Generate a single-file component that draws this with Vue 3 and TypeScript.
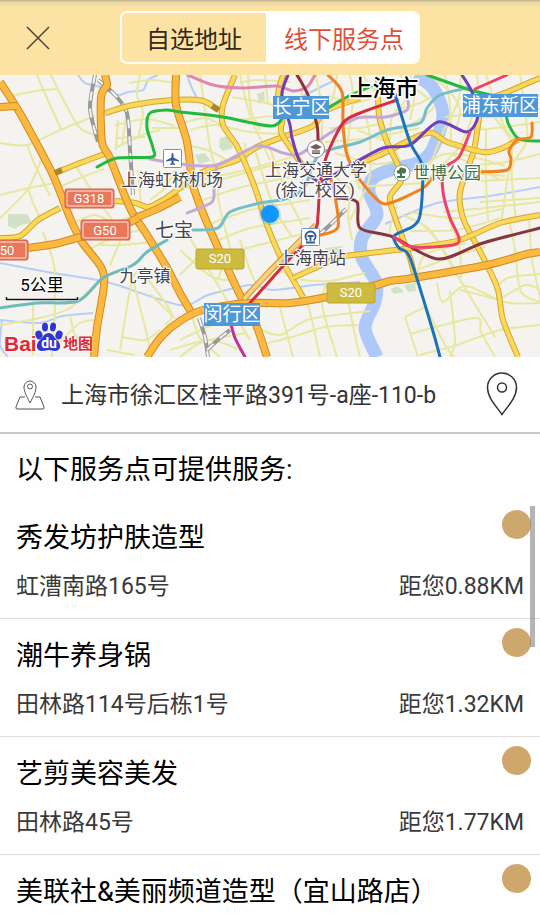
<script setup lang="ts">
import { ref } from 'vue'

type Road = { kind: string; pts: number[] }
type Shop = { name: string; address?: string; distance?: string }

const mode = ref<'custom' | 'offline'>('offline')
const address = ref('上海市徐汇区桂平路391号-a座-110-b')

const shops: Shop[] = [
  { name: '秀发坊护肤造型', address: '虹漕南路165号', distance: '距您0.88KM' },
  { name: '潮牛养身锅', address: '田林路114号后栋1号', distance: '距您1.32KM' },
  { name: '艺剪美容美发', address: '田林路45号', distance: '距您1.77KM' },
  { name: '美联社&美丽频道造型（宜山路店）' },
]

// Turns a flat x,y list into a smooth path through every point.
function smooth(p: number[]): string {
  const n = p.length / 2
  const x = (i: number) => p[2 * Math.min(Math.max(i, 0), n - 1)]
  const y = (i: number) => p[2 * Math.min(Math.max(i, 0), n - 1) + 1]
  let d = `M${x(0)} ${y(0)}`
  for (let i = 0; i < n - 1; i++) {
    const t = 7
    d += `C${x(i) + (x(i + 1) - x(i - 1)) / t} ${y(i) + (y(i + 1) - y(i - 1)) / t} ${x(i + 1) - (x(i + 2) - x(i)) / t} ${y(i + 1) - (y(i + 2) - y(i)) / t} ${x(i + 1)} ${y(i + 1)}`
  }
  return d
}

const streets: number[][] = [
  [37, 75, 50, 105, 61, 129], [51, 75, 65, 103, 80, 128, 100, 137], [0, 143, 27, 145, 60, 130, 95, 116],
  [27, 145, 35, 165, 50, 196], [12, 96, 35, 91, 57, 89], [0, 195, 20, 190, 55, 183], [0, 218, 28, 189, 45, 150],
  [28, 189, 34, 205, 42, 222], [75, 165, 105, 210, 130, 242], [60, 187, 80, 178, 104, 169], [115, 148, 145, 134, 160, 130],
  [118, 120, 116, 150], [127, 110, 122, 145], [115, 125, 147, 119, 175, 126], [115, 138, 145, 137], [140, 75, 137, 95, 143, 112, 138, 138],
  [129, 83, 152, 80, 175, 83], [152, 128, 180, 128], [141, 205, 138, 170], [150, 200, 165, 188, 175, 170],
  [75, 222, 95, 215, 115, 222, 138, 213], [100, 245, 120, 245, 153, 242], [110, 265, 127, 225], [88, 250, 112, 238, 140, 230],
  [52, 357, 54, 330, 55, 305, 54, 265, 43, 232], [0, 325, 40, 318, 70, 308, 95, 285], [33, 355, 33, 330, 33, 300],
  [60, 342, 80, 323, 97, 320], [70, 315, 75, 335, 90, 348], [120, 350, 131, 285, 138, 270], [133, 280, 147, 335, 150, 354],
  [122, 337, 145, 340, 160, 330], [107, 350, 135, 355], [140, 269, 171, 312, 165, 325], [150, 294, 175, 318],
  [179, 190, 220, 180, 275, 165, 320, 162], [190, 130, 215, 125, 250, 132, 283, 134], [183, 123, 205, 118, 225, 127],
  [200, 75, 205, 110, 210, 147, 220, 188], [240, 75, 250, 115, 270, 160], [222, 160, 218, 195, 228, 240, 238, 271],
  [187, 145, 210, 151, 235, 165], [200, 180, 245, 170, 300, 155], [203, 200, 239, 188, 290, 177], [205, 226, 250, 210, 310, 200],
  [215, 242, 250, 228, 310, 218], [220, 255, 255, 246, 310, 232], [255, 150, 273, 205, 292, 237], [269, 145, 285, 190, 302, 225],
  [245, 143, 249, 170, 270, 235], [190, 238, 215, 280, 250, 340], [180, 250, 212, 277, 238, 280], [180, 275, 200, 255],
  [218, 280, 224, 265, 245, 255], [242, 295, 278, 272, 290, 278], [240, 240, 250, 270, 259, 290],
  [290, 278, 306, 298, 320, 357], [300, 280, 330, 281, 365, 273], [327, 282, 322, 305, 337, 357], [279, 304, 293, 357],
  [257, 328, 280, 335, 310, 319, 370, 311], [264, 344, 295, 336, 325, 327, 358, 325], [180, 340, 210, 326, 240, 318],
  [180, 357, 202, 342, 245, 333], [192, 316, 200, 338, 220, 357], [170, 350, 210, 340, 240, 350], [347, 295, 356, 340, 360, 357],
  [240, 83, 255, 80, 290, 82], [232, 97, 270, 104, 275, 112], [240, 120, 275, 116, 330, 118],
  [248, 75, 251, 110, 260, 130], [265, 75, 268, 105], [316, 75, 320, 95, 328, 118], [301, 75, 302, 97],
  [337, 75, 333, 97, 323, 118, 322, 145], [350, 75, 353, 100, 348, 150, 360, 190], [329, 96, 355, 103, 385, 93],
  [329, 128, 360, 128, 382, 123], [325, 142, 370, 138, 420, 128], [335, 153, 375, 164, 400, 160],
  [365, 112, 370, 138, 369, 180, 350, 220], [358, 187, 390, 185, 422, 183], [335, 177, 350, 190, 348, 215, 352, 240],
  [357, 130, 390, 144, 400, 160], [363, 75, 375, 90, 400, 80, 430, 100], [401, 75, 405, 100, 392, 117, 390, 140],
  [410, 75, 414, 98, 410, 120], [395, 110, 420, 103, 430, 97], [400, 130, 422, 118, 435, 106],
  [430, 75, 450, 92, 460, 110, 456, 130], [445, 75, 450, 106, 451, 145], [461, 75, 458, 102, 445, 128, 430, 165],
  [477, 75, 477, 100, 459, 147, 420, 186], [425, 165, 444, 154, 469, 156, 505, 166], [430, 180, 460, 173, 505, 176],
  [450, 153, 475, 166, 500, 180], [486, 75, 491, 90, 506, 130, 520, 142], [520, 75, 523, 95, 527, 140, 512, 168, 516, 220],
  [494, 117, 512, 144, 507, 182, 501, 224], [486, 130, 486, 180, 488, 220], [483, 117, 505, 116, 540, 109],
  [477, 130, 505, 127, 540, 122], [445, 117, 490, 111, 540, 95], [465, 165, 501, 163, 540, 154], [443, 212, 485, 208, 540, 202],
  [480, 202, 540, 198], [480, 181, 540, 178], [409, 212, 455, 218, 502, 209], [397, 205, 390, 235, 415, 248],
  [402, 215, 430, 230, 460, 280, 495, 337], [423, 225, 437, 240, 455, 270], [447, 216, 459, 245, 461, 278],
  [415, 285, 425, 255, 466, 243], [417, 270, 455, 256, 485, 247], [410, 231, 456, 230, 500, 218],
  [437, 283, 443, 302, 465, 286, 502, 302], [460, 290, 485, 296, 510, 303, 540, 303], [405, 317, 425, 307],
  [405, 317, 418, 357], [410, 334, 475, 318, 481, 332, 495, 357], [425, 305, 445, 345, 454, 357],
  [420, 355, 457, 345, 500, 330, 540, 325], [510, 224, 515, 250, 521, 292, 541, 302], [529, 215, 532, 260, 542, 304],
  [497, 286, 510, 277, 540, 274], [502, 298, 525, 285, 540, 290], [450, 291, 455, 340, 450, 357],
]

const roads: Road[] = [
  { kind: 'rail', pts: [95, 75, 90, 108, 98, 142] },
  { kind: 'rail', pts: [98, 80, 115, 95, 127, 113, 130, 150, 133, 195] },
  { kind: 'rail', pts: [199, 318, 205, 337, 208, 357] },
  { kind: 'rail', pts: [207, 350, 220, 338, 230, 330] },
  { kind: 'rail', pts: [318, 236, 332, 223, 346, 209] },
  { kind: 'major', pts: [105, 113, 133, 105, 173, 100, 203, 101, 218, 110] },
  { kind: 'major', pts: [55, 173, 80, 163, 107, 153] },
  { kind: 'major', pts: [0, 238, 20, 236, 38, 220, 60, 208] },
  { kind: 'major', pts: [115, 201, 135, 203, 148, 207, 163, 200, 180, 188, 205, 171, 237, 160, 257, 147, 283, 137, 313, 126, 325, 111, 360, 98] },
  { kind: 'major', pts: [235, 75, 223, 105, 223, 125, 238, 148, 255, 188, 267, 225, 282, 260, 303, 297] },
  { kind: 'major', pts: [283, 75, 278, 95, 283, 115, 281, 132, 292, 150, 302, 165] },
  { kind: 'major', pts: [540, 78, 510, 91, 483, 105, 474, 150, 460, 192, 463, 218, 475, 242, 487, 265, 498, 290, 503, 320, 518, 357] },
  { kind: 'major', pts: [360, 163, 380, 155, 427, 133, 447, 142, 483, 152, 500, 149, 518, 140] },
  { kind: 'major', pts: [378, 80, 379, 115, 387, 142, 402, 177, 390, 197, 396, 220, 410, 258, 415, 279] },
  { kind: 'major', pts: [293, 278, 315, 268, 340, 257, 370, 253, 420, 247, 460, 240, 500, 223, 540, 215] },
  { kind: 'highway', pts: [0, 82, 15, 105, 25, 122, 53, 175, 70, 218, 82, 242, 101, 267, 104, 285, 97, 328, 94, 357] },
  { kind: 'highway', pts: [0, 107, 17, 106] },
  { kind: 'highway', pts: [105, 75, 107, 85, 101, 97, 102, 142, 110, 158, 130, 208, 147, 235, 167, 268, 180, 293, 191, 312] },
  { kind: 'highway', pts: [135, 218, 157, 209, 180, 197] },
  { kind: 'highway', pts: [28, 248, 55, 244, 77, 238, 115, 229, 138, 218] },
  { kind: 'highway', pts: [176, 75, 176, 105, 187, 142, 193, 185, 205, 218, 220, 252, 240, 295, 255, 322, 267, 357] },
  { kind: 'highway', pts: [147, 357, 161, 337, 180, 321, 203, 310, 247, 303, 290, 303, 327, 297, 373, 286, 390, 281, 413, 278, 487, 265, 527, 254, 540, 252] },
  { kind: 'amber', pts: [244, 299, 268, 273, 298, 243, 316, 225] },
]

const metro: { color: string; pts: number[] }[] = [
  { color: '#c5a9d5', pts: [150, 159, 180, 164, 217, 165, 257, 146, 283, 153, 300, 154, 327, 135, 357, 118, 386, 117, 407, 110, 408, 101] },
  { color: '#c5a9d5', pts: [217, 165, 214, 185, 212, 202, 187, 213] },
  { color: '#df87b0', pts: [188, 75, 213, 85, 243, 88, 277, 86, 293, 91, 307, 87, 315, 75] },
  { color: '#6ebbb9', pts: [0, 308, 37, 303, 78, 301, 103, 278, 133, 265, 147, 252, 167, 240] },
  { color: '#74bdc9', pts: [193, 230, 218, 228, 230, 212, 260, 203, 285, 199, 304, 188, 313, 165, 323, 152, 360, 142, 387, 130, 420, 123, 427, 108, 440, 95, 467, 88] },
  { color: '#24b83c', pts: [97, 167, 117, 158, 152, 157, 153, 148, 147, 128, 150, 113, 167, 110, 180, 112, 223, 117, 272, 126, 285, 114] },
  { color: '#24b83c', pts: [328, 108, 347, 97, 376, 84] },
  { color: '#24b83c', pts: [427, 75, 470, 90, 501, 99, 508, 123, 519, 139, 540, 141] },
  { color: '#f2821e', pts: [328, 75, 342, 92, 343, 125, 347, 155, 360, 180, 380, 202, 393, 202, 423, 188, 432, 178] },
  { color: '#f2821e', pts: [480, 172, 507, 170, 511, 159, 509, 151, 517, 140, 531, 137, 532, 123] },
  { color: '#f2821e', pts: [329, 174, 334, 191, 338, 227, 320, 235] },
  { color: '#7040ba', pts: [288, 75, 282, 95, 290, 125, 292, 138, 300, 162, 313, 178, 323, 181, 347, 167, 383, 148, 410, 145, 438, 122, 467, 132, 478, 116, 472, 92, 462, 75] },
  { color: '#922e3c', pts: [297, 75, 308, 95, 317, 125, 318, 142] },
  { color: '#863640', pts: [337, 198, 357, 202, 360, 228, 393, 237, 438, 259, 483, 243, 540, 228] },
  { color: '#d42d3f', pts: [397, 100, 360, 113, 343, 123, 327, 155, 320, 185, 318, 215, 314, 232, 283, 266, 250, 303] },
  { color: '#c22e9c', pts: [231, 324, 235, 338, 245, 357] },
  { color: '#1b72ba', pts: [395, 94, 410, 142, 422, 165, 422, 198, 419, 219, 412, 227, 394, 236, 399, 248, 410, 258, 432, 328, 440, 357] },
  { color: '#ee4269', pts: [507, 75, 475, 89] },
  { color: '#ee4269', pts: [470, 132, 459, 157, 444, 169, 443, 192, 450, 218, 459, 238, 453, 245, 413, 247, 394, 237] },
]

const streams: number[][] = [
  [78, 75, 85, 83, 100, 87, 117, 95, 128, 92, 143, 90, 148, 80, 158, 75],
  [187, 75, 191, 86, 197, 98], [0, 263, 53, 273, 107, 282, 180, 305, 208, 295, 250, 285, 273, 290, 315, 285, 360, 282],
  [0, 320, 40, 323, 62, 316, 93, 313], [2, 320, 0, 345, 8, 357], [385, 224, 437, 203, 490, 196, 540, 187], [301, 97, 335, 80],
]
const river = [415, 75, 433, 88, 443, 115, 433, 148, 420, 162, 390, 170, 373, 178, 369, 192, 377, 215, 362, 238, 362, 258, 376, 282, 375, 302, 365, 328, 377, 357]
</script>

<template>
  <main class="screen">
    <header class="topbar">
      <button class="close" type="button" aria-label="关闭">
        <svg viewBox="0 0 24 24" aria-hidden="true"><path d="M1 1L23 23M23 1L1 23" /></svg>
      </button>
      <nav class="tabs">
        <button type="button" :class="['tab', { active: mode === 'custom' }]" @click="mode = 'custom'">自选地址</button>
        <button type="button" :class="['tab', { active: mode === 'offline' }]" @click="mode = 'offline'">线下服务点</button>
      </nav>
    </header>

    <svg class="map" viewBox="0 75 540 282" preserveAspectRatio="xMidYMid slice" role="img" aria-label="上海市">
      <rect x="0" y="75" width="540" height="282" fill="#f5f3ef" />
      <g fill="#d2e2c7">
        <path d="M8 214h20l3 9-10 2-6 4-7-3z" /><path d="M220 138l8-2 5 12-10 3-4-4z" /><path d="M195 155l10-2 6 8-12 3z" />
        <path d="M257 94l7-3 1 9-6 4z" /><path d="M390 289l8-3 6 6-10 2z" /><path d="M404 285l11-2 1 8-8 1z" /><path d="M325 248l17-2 1 7-16 1z" />
      </g>
      <path class="stream" v-for="(s, i) in streams" :key="'w' + i" :d="smooth(s)" />
      <path class="river" :d="smooth(river)" />
      <path class="street" v-for="(s, i) in streets" :key="'s' + i" :d="smooth(s)" />
      <g v-for="(r, i) in roads" :key="'r' + i" :class="r.kind">
        <path class="casing" :d="smooth(r.pts)" />
        <path class="fill" :d="smooth(r.pts)" />
      </g>
      <path d="M55 173l7-3M212 106l7 4" stroke="#ad862b" stroke-width="6" />
      <path class="metro" v-for="(m, i) in metro" :key="'m' + i" :d="smooth(m.pts)" :stroke="m.color" />

      <g class="shield red">
        <rect x="65" y="189" width="49" height="19" rx="2" /><rect class="inner" x="67" y="191" width="45" height="15" rx="1" />
        <text x="89" y="203">G318</text>
        <rect x="81" y="220" width="49" height="20" rx="2" /><rect class="inner" x="83" y="222" width="45" height="16" rx="1" />
        <text x="105" y="235">G50</text>
        <rect x="-21" y="240" width="49" height="20" rx="2" /><rect class="inner" x="-19" y="242" width="45" height="16" rx="1" />
        <text x="7" y="255">50</text>
      </g>
      <g class="shield olive">
        <rect x="196" y="249" width="48" height="20" rx="2" /><text x="220" y="263">S20</text>
        <rect x="327" y="283" width="48" height="20" rx="2" /><text x="351" y="297">S20</text>
      </g>

      <g class="district">
        <rect x="273" y="96" width="56" height="23" /><text x="301" y="114">长宁区</text>
        <rect x="463" y="94" width="75" height="23" /><text x="500" y="112">浦东新区</text>
        <rect x="204" y="303" width="56" height="23" /><text x="232" y="321">闵行区</text>
      </g>

      <g class="place">
        <text x="172" y="186">上海虹桥机场</text>
        <text x="316" y="176">上海交通大学</text>
        <text x="315" y="196">(徐汇校区)</text>
        <text x="312" y="264">上海南站</text>
        <text x="145" y="282">九亭镇</text>
        <text class="town" x="174" y="237">七宝</text>
        <text class="park" x="447" y="179">世博公园</text>
      </g>
      <text class="city" x="384" y="96">上海市</text>

      <rect x="163.500" y="149.500" width="18" height="18" rx="1" fill="#fff" stroke="#7494bd" />
      <path d="M172.500 153q1 0 1 2v2.500l5.500 3v1l-5.500-1v2.500l1.500 1v1l-2.500-.4-2.500.4v-1l1.500-1v-2.500l-5.500 1v-1l5.500-3V155q0-2 1-2z" fill="#345a98" />

      <circle cx="316" cy="149" r="8.500" fill="#fff" stroke="#99888a" />
      <path d="M310 147l6-3 6 3-6 3zM312 150h8v4h-8z" fill="#735e5e" />
      <path d="M311 150h10M312 152h8" stroke="#fff" stroke-width=".7" />

      <rect x="301.500" y="228.500" width="18" height="17" rx="1" fill="#fff" stroke="#7494bd" />
      <path d="M307.500 240.500a5 5 0 1 1 6 0M307.500 236h6M310.500 236v5M306 242.500h9" fill="none" stroke="#31589a" stroke-width="1.800" />

      <circle cx="402" cy="173" r="8" fill="#fff" stroke="#86a18a" />
      <path d="M397 173q-1-3 2-3 1-4 4-2 4 0 3 4-2 3-4 1v3h3v2h-8v-2h3v-2z" fill="#49774d" />

      <circle cx="270" cy="214" r="11" fill="#1296fb" opacity=".2" />
      <circle cx="270" cy="214" r="9" fill="#1296fb" />

      <path d="M6.500 296v3.500h71V296" fill="none" stroke="#fff" stroke-width="3" opacity=".8" />
      <path d="M6.500 297v2.500h71V297" fill="none" stroke="#111" stroke-width="1.500" />
      <text class="scale" x="42" y="291">5公里</text>

      <g class="brand">
        <text class="latin" x="4" y="351">Bai</text>
        <g fill="#2f37d0" stroke="#fff" stroke-width="1" paint-order="stroke">
          <ellipse cx="39" cy="335" rx="3.500" ry="4.500" transform="rotate(-20 39 335)" />
          <ellipse cx="45" cy="327" rx="3" ry="4.500" />
          <ellipse cx="53" cy="327" rx="3" ry="4.500" transform="rotate(8 53 327)" />
          <ellipse cx="59" cy="335" rx="3.500" ry="4.500" transform="rotate(20 59 335)" />
          <path d="M49 333c4 0 5 4 8 7 5 4 4 11-2 11-3 0-4-1-6-1s-4 1-7 1c-6 0-7-7-2-11 3-3 4-7 9-7z" />
        </g>
        <text class="du" x="49" y="348">du</text>
        <text class="hanzi" x="78" y="349">地图</text>
      </g>
    </svg>

    <section class="address">
      <svg class="place-icon" viewBox="0 0 30 32" aria-hidden="true">
        <path d="M15 25C12 19 9 14 9 9a6 6 0 0 1 12 0c0 5-3 10-6 16z" /><circle cx="15" cy="8.500" r="2.500" />
        <path d="M10 19H5L1 29q-.5 2 1 2h26q1.500 0 1-2l-4-10h-5" />
      </svg>
      <span class="address-text">{{ address }}</span>
      <button class="locate" type="button" aria-label="定位">
        <svg viewBox="0 0 32 44" aria-hidden="true">
          <path d="M16 42.500C11 35 1.500 26 1.500 15.500a14.500 14.500 0 0 1 29 0C30.500 26 21 35 16 42.500z" /><circle cx="16" cy="15.500" r="4.500" />
        </svg>
      </button>
    </section>

    <section class="services">
      <h1>以下服务点可提供服务:</h1>
      <ul>
        <li v-for="shop in shops" :key="shop.name">
          <h2>{{ shop.name }}</h2>
          <p v-if="shop.address"><span>{{ shop.address }}</span><span>{{ shop.distance }}</span></p>
          <i class="dot"></i>
        </li>
      </ul>
      <div class="scrollbar"></div>
    </section>
  </main>
</template>

<style>
body { margin: 0; background: #fefefe; }
</style>

<style scoped>
.screen {
  min-height: 100vh;
  font-family: Roboto, "Noto Sans CJK SC", sans-serif;
  color: #000;
  background: #fefefe;
}
button { padding: 0; border: 0; background: none; font: inherit; cursor: pointer; }
svg { display: block; }
.topbar {
  display: grid;
  grid-template-columns: 76px 1fr 76px;
  align-items: center;
  height: 75px;
  background: linear-gradient(#b9a98a 0, #ecd8a4 2px, #fce3a4 8px, #fce3a4 100%);
}
.close { display: flex; align-items: center; justify-content: center; height: 75px; }
.close svg { width: 24px; height: 24px; fill: none; stroke: #4b4338; stroke-width: 1.5; }
.tabs {
  display: flex;
  justify-self: center;
  box-sizing: border-box;
  width: 300px;
  height: 53px;
  border: 2px solid #fffdf5;
  border-radius: 7px;
  overflow: hidden;
}
.tab { flex: 146 1 0; font-size: 24px; color: #33291a; }
.tab:last-child { flex-grow: 150; padding-left: 4px; }
.tab.active { background: #fff; color: #dd5138; }

.map { width: 100%; aspect-ratio: 540 / 282; }
.map path { stroke-linejoin: round; }
.stream, .river, .street, .metro, .casing, .fill { fill: none; }
.stream { stroke: #b7cdf8; stroke-width: 2; }
.river { stroke: #adc8f9; stroke-width: 13; }
.street { stroke: #e7e7a0; stroke-width: 2; }
.metro { stroke-width: 3; stroke-linecap: round; }
.major .casing { stroke: #d1a635; stroke-width: 6; }
.major .fill { stroke: #fbd956; stroke-width: 4; }
.highway .casing { stroke: #cc8b22; stroke-width: 8; }
.highway .fill { stroke: #fdb83f; stroke-width: 6; }
.amber .casing { stroke: #cb9037; stroke-width: 6; }
.amber .fill { stroke: #fbd07a; stroke-width: 4; }
.rail .casing { stroke: #999; stroke-width: 4; }
.rail .fill { stroke: #f6f6f6; stroke-width: 2; stroke-dasharray: 9 8; }
.map text { text-anchor: middle; }
.shield text { font-size: 13px; fill: #fff; }
.red rect { fill: #e9775a; stroke: #cf6249; }
.red .inner { fill: none; stroke: #ffe3dc; }
.olive rect { fill: #cdbb3f; stroke: #b9a62f; }
.district rect { fill: #4f98d8; }
.district text { font-size: 19px; fill: #fff; }
.place text { font-size: 17px; fill: #44434d; stroke: #fff; stroke-width: 2px; paint-order: stroke; }
.place .town { font-size: 19px; }
.place .park { fill: #40714a; }
.city { font-size: 23px; font-weight: 500; fill: #000; stroke: #fff; stroke-width: 3px; paint-order: stroke; }
.scale { font-size: 17px; fill: #000; stroke: #fff; stroke-width: 2px; paint-order: stroke; }
.brand text { stroke: #fff; stroke-width: 1px; paint-order: stroke; font-weight: 700; }
.brand .latin { font-family: "Liberation Sans", sans-serif; font-size: 21px; fill: #dc2b34; text-anchor: start; }
.brand .du { font-size: 14px; fill: #fff; stroke: none; }
.brand .hanzi { font-size: 15px; fill: #dc2b34; }

.address {
  display: flex;
  align-items: center;
  box-sizing: border-box;
  height: 77px;
  padding: 0 22px 2px 15px;
  border-bottom: 2px solid #c8c8c8;
}
.place-icon { width: 30px; height: 32px; fill: none; stroke: #555; stroke-width: 1; }
.address-text { flex: 1; margin-left: 16px; padding-bottom: 2px; font-size: 23px; color: #333; }
.locate svg { width: 32px; height: 44px; fill: none; stroke: #333; stroke-width: 1.5; }

.services { position: relative; }
h1, h2, p, ul { margin: 0; padding: 0; font-weight: 400; }
h1 { padding: 16px 16px 11px; font-size: 27px; line-height: 40px; }
ul { list-style: none; }
li { position: relative; box-sizing: border-box; padding: 17px 16px 8px; }
li:not(:last-child) { height: 118px; border-bottom: 1px solid #dedede; }
h2 { font-size: 27px; line-height: 40px; }
p { display: flex; justify-content: space-between; margin-top: 13px; font-size: 23px; line-height: 32px; color: #3a3a3a; }
.dot { position: absolute; top: 9px; right: 9px; width: 29px; height: 29px; border-radius: 50%; background: #cda76b; }
.scrollbar { position: absolute; top: 72px; right: 5px; width: 5px; height: 141px; background: rgba(120, 120, 120, 0.55); }
</style>
